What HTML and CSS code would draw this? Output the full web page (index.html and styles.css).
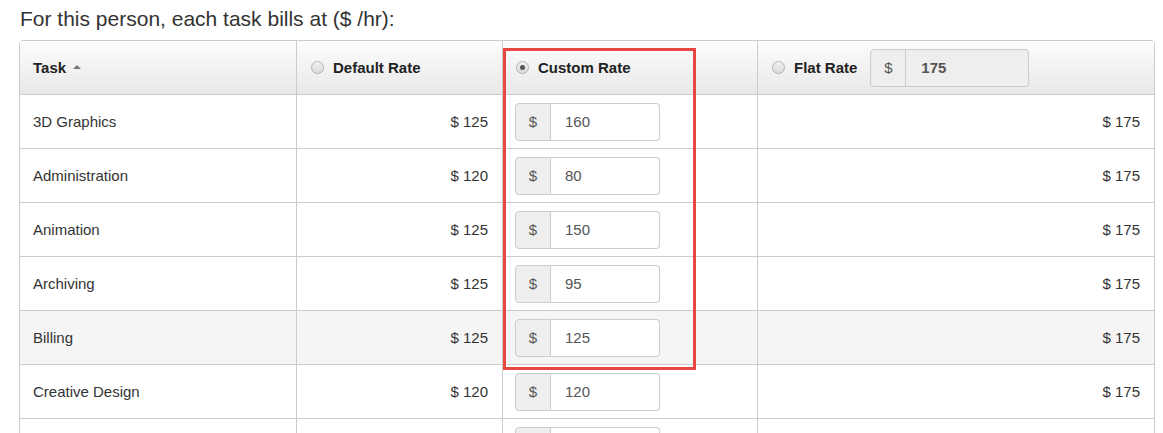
FILE: index.html
```html
<!DOCTYPE html>
<html>
<head>
<meta charset="utf-8">
<link rel="stylesheet" href="styles.css">
</head>
<body>
<div class="page">
  <p class="intro">For this person, each task bills at ($ /hr):</p>
  <div class="rates">
    <div class="row head">
      <div class="cell task">Task <span class="caret"></span></div>
      <div class="cell"><span class="radio"></span>Default Rate</div>
      <div class="cell custom"><span class="radio checked"></span>Custom Rate</div>
      <div class="cell"><span class="radio"></span>Flat Rate
        <span class="group flat"><span class="addon">$</span><span class="field">175</span></span>
      </div>
    </div>
    <div class="row">
      <div class="cell">3D Graphics</div>
      <div class="cell num">$ 125</div>
      <div class="cell custom"><span class="group"><span class="addon">$</span><span class="field">160</span></span></div>
      <div class="cell num">$ 175</div>
    </div>
    <div class="row">
      <div class="cell">Administration</div>
      <div class="cell num">$ 120</div>
      <div class="cell custom"><span class="group"><span class="addon">$</span><span class="field">80</span></span></div>
      <div class="cell num">$ 175</div>
    </div>
    <div class="row">
      <div class="cell">Animation</div>
      <div class="cell num">$ 125</div>
      <div class="cell custom"><span class="group"><span class="addon">$</span><span class="field">150</span></span></div>
      <div class="cell num">$ 175</div>
    </div>
    <div class="row">
      <div class="cell">Archiving</div>
      <div class="cell num">$ 125</div>
      <div class="cell custom"><span class="group"><span class="addon">$</span><span class="field">95</span></span></div>
      <div class="cell num">$ 175</div>
    </div>
    <div class="row hover">
      <div class="cell">Billing</div>
      <div class="cell num">$ 125</div>
      <div class="cell custom"><span class="group"><span class="addon">$</span><span class="field">125</span></span></div>
      <div class="cell num">$ 175</div>
    </div>
    <div class="row">
      <div class="cell">Creative Design</div>
      <div class="cell num">$ 120</div>
      <div class="cell custom"><span class="group"><span class="addon">$</span><span class="field">120</span></span></div>
      <div class="cell num">$ 175</div>
    </div>
    <div class="row partial">
      <div class="cell"></div>
      <div class="cell num"></div>
      <div class="cell custom"><span class="group"><span class="addon"></span><span class="field"></span></span></div>
      <div class="cell num"></div>
    </div>
    <div class="highlight"></div>
  </div>
</div>
</body>
</html>
```

FILE: styles.css
```css
html, body {
  margin: 0;
  padding: 0;
  overflow: hidden;
  background: #fff;
}
body {
  font-family: "Liberation Sans", Arial, sans-serif;
  color: #333;
}
.page {
  padding: 7px 0 0 19px;
  height: 433px;
  box-sizing: border-box;
  overflow: hidden;
}
.intro {
  margin: 0 0 9px 1px;
  font-size: 21px;
  line-height: 24px;
  color: #333;
}
.rates {
  position: relative;
  width: 1136px;
  box-sizing: border-box;
  border: 1px solid #ccc;
  border-radius: 4px;
  overflow: hidden;
}
.row {
  display: grid;
  grid-template-columns: 276px 206px 255px 397px;
  border-top: 1px solid #ccc;
  background: #fff;
}
.row.head {
  border-top: none;
  background: linear-gradient(to bottom, #fdfdfd 0%, #e8e8e8 100%);
}
.row.hover {
  background: #f5f5f5;
}
.cell {
  height: 53px;
  box-sizing: border-box;
  display: flex;
  align-items: center;
  padding: 0 14px 0 13px;
  font-size: 15px;
  border-left: 1px solid #ccc;
}
.cell:first-child {
  border-left: none;
}
.cell.custom {
  padding-left: 12px;
}
.head .cell {
  font-weight: bold;
  color: #222;
}
.cell.num {
  justify-content: flex-end;
}
.caret {
  display: inline-block;
  width: 0;
  height: 0;
  margin-left: 7px;
  margin-top: -1px;
  border-left: 4px solid transparent;
  border-right: 4px solid transparent;
  border-bottom: 4px solid #777;
}
.radio {
  display: inline-block;
  width: 11px;
  height: 11px;
  border: 1px solid #b3b3b3;
  border-radius: 50%;
  background: linear-gradient(to bottom, #f2f2f2, #d9d9d9);
  margin: 0 9px 0 1px;
  position: relative;
  flex: none;
}
.radio.checked::after {
  content: "";
  position: absolute;
  left: 3px;
  top: 3px;
  width: 5px;
  height: 5px;
  border-radius: 50%;
  background: #555;
}
.head .cell.custom .radio {
  margin-left: 1px;
}
.group {
  display: inline-flex;
  height: 38px;
  width: 145px;
  box-sizing: border-box;
}
.group .addon {
  width: 36px;
  box-sizing: border-box;
  display: flex;
  align-items: center;
  justify-content: center;
  background: #eee;
  border: 1px solid #ccc;
  border-radius: 4px 0 0 4px;
  color: #555;
  font-size: 15px;
  font-weight: normal;
}
.group .field {
  flex: 1;
  box-sizing: border-box;
  display: flex;
  align-items: center;
  padding-left: 14px;
  background: #fff;
  border: 1px solid #ccc;
  border-left: none;
  border-radius: 0 4px 4px 0;
  color: #555;
  font-size: 15px;
  font-weight: normal;
}
.group.flat {
  width: 159px;
  margin-left: 13px;
}
.group.flat .field {
  background: #eee;
  font-weight: bold;
  color: #555;
  padding-left: 15px;
}
.highlight {
  position: absolute;
  left: 483px;
  top: 7px;
  width: 193px;
  height: 322px;
  box-sizing: border-box;
  border: 3px solid #e8473f;
  pointer-events: none;
}
```
